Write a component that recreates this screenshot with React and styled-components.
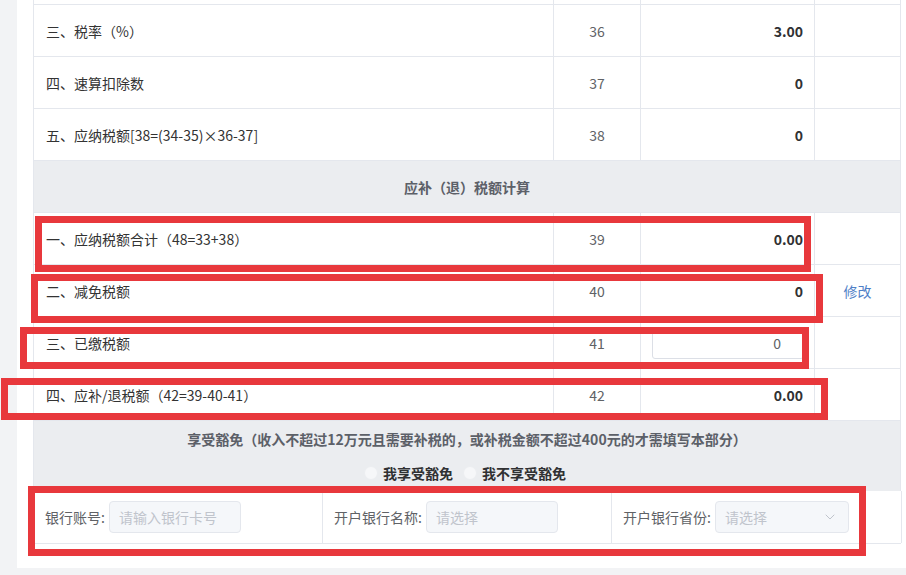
import React from "react";
import styled, { createGlobalStyle } from "styled-components";
import { ChevronDown } from "lucide-react";

const GlobalStyle = createGlobalStyle`
  html, body {
    margin: 0;
    padding: 0;
    background: #f2f3f5;
    font-family: "Noto Sans CJK SC", "Liberation Sans", sans-serif;
    font-size: 14px;
    color: #333;
  }
  * { box-sizing: border-box; }
`;

const COLS = "520px 87px 174px 86px";

const Page = styled.div`
  position: relative;
  width: 906px;
  height: 575px;
  overflow: hidden;
`;

// the form is scrolled: the card starts above the window
const Card = styled.div`
  margin: -48px 0 0 17px;
  padding: 0 5px 24px 16px;
  background: #fff;
`;

const Table = styled.div`
  width: 868px;
  border-left: 1px solid #e4e7ed;
  border-top: 1px solid #e4e7ed;
`;

const Row = styled.div`
  display: grid;
  grid-template-columns: ${COLS};
  height: 52px;
  border-bottom: 1px solid #e4e7ed;
`;

const Cell = styled.div`
  display: flex;
  align-items: center;
  border-right: 1px solid #e4e7ed;
  line-height: 20px;
  padding: ${(p) => (p.$pad ? "0 12px" : "0")};
`;

const Label = styled(Cell)`
  color: #333;
`;

const Num = styled(Cell)`
  justify-content: center;
  color: #606266;
`;

const Value = styled(Cell)`
  justify-content: flex-end;
  padding-right: 11px;
  font-weight: 700;
  color: #303133;
`;

const Action = styled(Cell)`
  justify-content: center;
  color: #4f7fc7;
`;

const SectionHead = styled.div`
  height: 52px;
  background: #ebedf0;
  border-right: 1px solid #e4e7ed;
  border-bottom: 1px solid #e4e7ed;
  display: flex;
  align-items: center;
  justify-content: center;
  font-weight: 700;
  color: #5c6068;
`;

const AmountInput = styled.div`
  width: 152px;
  height: 32px;
  margin-left: 11px;
  border: 1px solid #dcdfe6;
  border-radius: 3px;
  display: flex;
  align-items: center;
  justify-content: flex-end;
  padding-right: 22px;
  color: #606266;
`;

const Exempt = styled.div`
  height: 70px;
  background: #ebedf0;
  border-right: 1px solid #e4e7ed;
  padding-top: 8px;
  display: flex;
  flex-direction: column;
  align-items: center;
  gap: 14px;
`;

const ExemptTitle = styled.div`
  line-height: 20px;
  font-weight: 700;
  color: #5c6068;
`;

const RadioGroup = styled.div`
  display: flex;
  align-items: center;
  gap: 10px;
  line-height: 20px;
  margin-left: -4px;
`;

const RadioItem = styled.label`
  display: flex;
  align-items: center;
  gap: 5px;
  font-weight: 700;
  color: #303133;
`;

const RadioDot = styled.span`
  width: 14px;
  height: 14px;
  border-radius: 50%;
  background: #f6f7f9;
  border: 1px solid #eceef1;
`;

const BankRow = styled.div`
  display: grid;
  grid-template-columns: 289px 289px 290px;
  height: 53px;
  border-bottom: 1px solid #e4e7ed;
`;

const BankCell = styled.div`
  display: flex;
  align-items: center;
  gap: 4px;
  padding-left: 11px;
  border-right: 1px solid #e4e7ed;
`;

const BankLabel = styled.span`
  color: #606266;
  white-space: nowrap;
`;

const Field = styled.div`
  width: ${(p) => p.$w || 132}px;
  height: 32px;
  background: #f5f7fa;
  border: 1px solid #e4e7ed;
  border-radius: 4px;
  display: flex;
  align-items: center;
  justify-content: space-between;
  padding: 0 10px 0 9px;
  color: #c0c4cc;
  white-space: nowrap;
`;

const Annot = styled.div`
  position: absolute;
  left: ${(p) => p.$x}px;
  top: ${(p) => p.$y}px;
  width: ${(p) => p.$w}px;
  height: ${(p) => p.$h}px;
  border: 7px solid #e8383c;
  pointer-events: none;
`;

const topRows = [
  { label: "", num: "", value: "" },
  { label: "三、税率（%）", num: "36", value: "3.00" },
  { label: "四、速算扣除数", num: "37", value: "0" },
  { label: "五、应纳税额[38=(34-35)×36-37]", num: "38", value: "0" },
];

const annotations = [
  { x: 35, y: 216, w: 776, h: 56 },
  { x: 31, y: 274, w: 792, h: 49 },
  { x: 20, y: 327, w: 789, h: 42 },
  { x: 1, y: 378, w: 827, h: 42 },
  { x: 28, y: 486, w: 838, h: 70 },
];

export default function App() {
  return (
    <>
      <GlobalStyle />
      <Page>
        <Card>
          <Table>
            {topRows.map((r, i) => (
              <Row key={i}>
                <Label $pad>{r.label}</Label>
                <Num>{r.num}</Num>
                <Value>{r.value}</Value>
                <Cell />
              </Row>
            ))}
            <SectionHead>应补（退）税额计算</SectionHead>
            <Row>
              <Label $pad>一、应纳税额合计（48=33+38）</Label>
              <Num>39</Num>
              <Value>0.00</Value>
              <Cell />
            </Row>
            <Row>
              <Label $pad>二、减免税额</Label>
              <Num>40</Num>
              <Value>0</Value>
              <Action>修改</Action>
            </Row>
            <Row>
              <Label $pad>三、已缴税额</Label>
              <Num>41</Num>
              <Cell>
                <AmountInput>0</AmountInput>
              </Cell>
              <Cell />
            </Row>
            <Row>
              <Label $pad>四、应补/退税额（42=39-40-41）</Label>
              <Num>42</Num>
              <Value>0.00</Value>
              <Cell />
            </Row>
            <Exempt>
              <ExemptTitle>
                享受豁免（收入不超过12万元且需要补税的，或补税金额不超过400元的才需填写本部分）
              </ExemptTitle>
              <RadioGroup>
                <RadioItem>
                  <RadioDot />
                  我享受豁免
                </RadioItem>
                <RadioItem>
                  <RadioDot />
                  我不享受豁免
                </RadioItem>
              </RadioGroup>
            </Exempt>
            <BankRow>
              <BankCell>
                <BankLabel>银行账号:</BankLabel>
                <Field>请输入银行卡号</Field>
              </BankCell>
              <BankCell>
                <BankLabel>开户银行名称:</BankLabel>
                <Field>请选择</Field>
              </BankCell>
              <BankCell>
                <BankLabel>开户银行省份:</BankLabel>
                <Field $w={134}>
                  请选择
                  <ChevronDown size={16} strokeWidth={1.5} color="#c0c4cc" />
                </Field>
              </BankCell>
            </BankRow>
          </Table>
        </Card>
        {annotations.map((a, i) => (
          <Annot key={i} $x={a.x} $y={a.y} $w={a.w} $h={a.h} />
        ))}
      </Page>
    </>
  );
}
